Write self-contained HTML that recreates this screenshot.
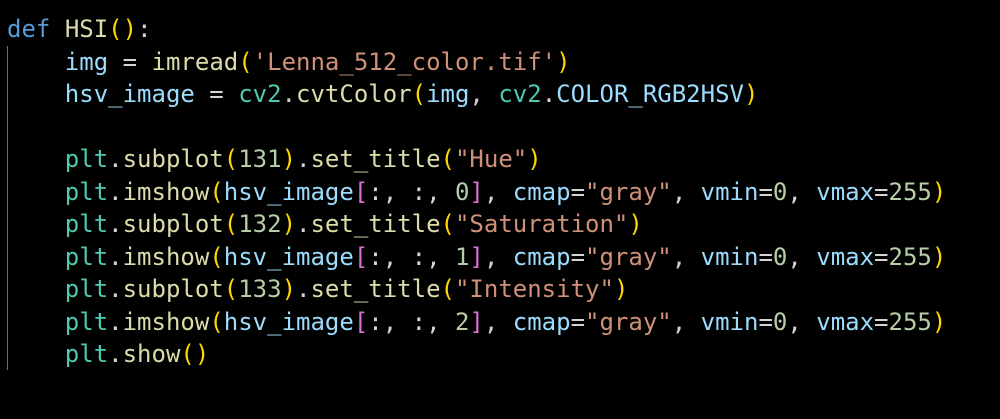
<!DOCTYPE html><html><head><style>
body{margin:0;background:#000;width:1000px;height:419px;overflow:hidden;position:relative}
pre{margin:0;position:absolute;left:7px;top:13px;font-family:"DejaVu Sans Mono","Liberation Mono",monospace;font-size:24px;line-height:32.5px;color:#d4d4d4}
.k{color:#569cd6}.f{color:#dcdcaa}.v{color:#9cdcfe}.c{color:#4ec9b0}.s{color:#ce9178}.n{color:#b5cea8}.p{color:#ffd700}.b{color:#da70d6}.o{color:#9cdcfe}
.g{position:absolute;left:7px;top:46px;width:1px;height:324px;background:#707070}
</style></head><body><div class="g"></div><pre><span class="k">def</span> <span class="f">HSI</span><span class="p">()</span>:
    <span class="v">img</span> = <span class="f">imread</span><span class="p">(</span><span class="s">'Lenna_512_color.tif'</span><span class="p">)</span>
    <span class="v">hsv_image</span> = <span class="c">cv2</span>.<span class="f">cvtColor</span><span class="p">(</span><span class="v">img</span>, <span class="c">cv2</span>.<span class="o">COLOR_RGB2HSV</span><span class="p">)</span>

    <span class="c">plt</span>.<span class="f">subplot</span><span class="p">(</span><span class="n">131</span><span class="p">)</span>.<span class="f">set_title</span><span class="p">(</span><span class="s">"Hue"</span><span class="p">)</span>
    <span class="c">plt</span>.<span class="f">imshow</span><span class="p">(</span><span class="v">hsv_image</span><span class="b">[</span>:, :, <span class="n">0</span><span class="b">]</span>, <span class="v">cmap</span>=<span class="s">"gray"</span>, <span class="v">vmin</span>=<span class="n">0</span>, <span class="v">vmax</span>=<span class="n">255</span><span class="p">)</span>
    <span class="c">plt</span>.<span class="f">subplot</span><span class="p">(</span><span class="n">132</span><span class="p">)</span>.<span class="f">set_title</span><span class="p">(</span><span class="s">"Saturation"</span><span class="p">)</span>
    <span class="c">plt</span>.<span class="f">imshow</span><span class="p">(</span><span class="v">hsv_image</span><span class="b">[</span>:, :, <span class="n">1</span><span class="b">]</span>, <span class="v">cmap</span>=<span class="s">"gray"</span>, <span class="v">vmin</span>=<span class="n">0</span>, <span class="v">vmax</span>=<span class="n">255</span><span class="p">)</span>
    <span class="c">plt</span>.<span class="f">subplot</span><span class="p">(</span><span class="n">133</span><span class="p">)</span>.<span class="f">set_title</span><span class="p">(</span><span class="s">"Intensity"</span><span class="p">)</span>
    <span class="c">plt</span>.<span class="f">imshow</span><span class="p">(</span><span class="v">hsv_image</span><span class="b">[</span>:, :, <span class="n">2</span><span class="b">]</span>, <span class="v">cmap</span>=<span class="s">"gray"</span>, <span class="v">vmin</span>=<span class="n">0</span>, <span class="v">vmax</span>=<span class="n">255</span><span class="p">)</span>
    <span class="c">plt</span>.<span class="f">show</span><span class="p">()</span></pre></body></html>
